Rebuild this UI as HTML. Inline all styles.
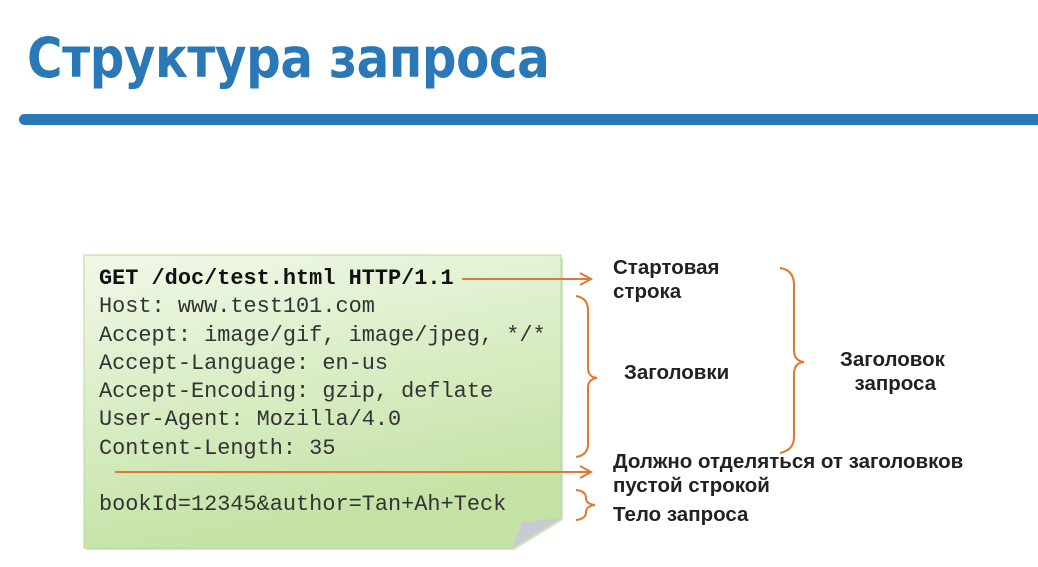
<!DOCTYPE html>
<html><head><meta charset="utf-8"><style>
body{margin:0;width:1038px;height:567px;background:#fff;position:relative;overflow:hidden;font-family:"Liberation Sans","DejaVu Sans",sans-serif}
.t{position:absolute;left:27px;top:26px;font-size:55px;font-weight:bold;color:#2a78b6;letter-spacing:-0.5px;font-family:"DejaVu Sans","Liberation Sans",sans-serif;transform:scaleX(0.88);transform-origin:left}
.bar{position:absolute;left:19px;top:114px;width:1030px;height:11px;border-radius:6px;background:#2a78b6}
.code{position:absolute;left:99px;top:265px;font-family:"Liberation Mono",monospace;font-size:21.9px;line-height:28.3px;color:#333;white-space:pre}
.l{position:absolute;font-weight:bold;font-size:20.5px;color:#222;line-height:24px;font-family:"Liberation Sans",sans-serif}
</style></head><body>
<div class="t">Структура запроса</div>
<div class="bar"></div>
<svg width="1038" height="567" style="position:absolute;left:0;top:0">
<defs><linearGradient id="g" x1="0" y1="0" x2="0.3" y2="1"><stop offset="0" stop-color="#f1f8e8"/><stop offset="1" stop-color="#c3e2a4"/></linearGradient></defs>
<polygon points="86,258 563,258 563,520 514,550 86,550" fill="#b8cfa8" opacity="0.6"/>
<polygon points="84,255 561,255 561,518 512,548 84,548" fill="url(#g)" stroke="#b8d7a0" stroke-width="1"/>
<polygon points="561,518 512,548 522,522" fill="#c9cbd0"/>
<g stroke="#e0782f" stroke-width="2" fill="none">
<path d="M462 279 H590 M580 273 L591 279 L580 285"/>
<path d="M115 472 H590 M580 466 L591 472 L580 478"/>
<path d="M576 296 Q588 298 588 310 V368 Q588 377 597 378 Q588 379 588 388 V444 Q588 455 576 457"/>
<path d="M576 490 Q586 491 586 498 Q586 504 595 505 Q586 506 586 512 Q586 519 576 520"/>
<path d="M780 268 Q794 270 794 285 V350 Q794 361 804 362 Q794 363 794 374 V437 Q794 450 780 453"/>
</g>
</svg>
<div class="code"><b style="color:#111">GET /doc/test.html HTTP/1.1</b>
Host: www.test101.com
Accept: image/gif, image/jpeg, */*
Accept-Language: en-us
Accept-Encoding: gzip, deflate
User-Agent: Mozilla/4.0
Content-Length: 35

bookId=12345&amp;author=Tan+Ah+Teck</div>
<div class="l" style="left:613px;top:256px">Стартовая<br>строка</div>
<div class="l" style="left:624px;top:361px">Заголовки</div>
<div class="l" style="left:840px;top:348px;text-align:center">Заголовок<br>&nbsp;запроса</div>
<div class="l" style="left:613px;top:450px">Должно отделяться от заголовков<br>пустой строкой</div>
<div class="l" style="left:613px;top:503px">Тело запроса</div>
</body></html>
